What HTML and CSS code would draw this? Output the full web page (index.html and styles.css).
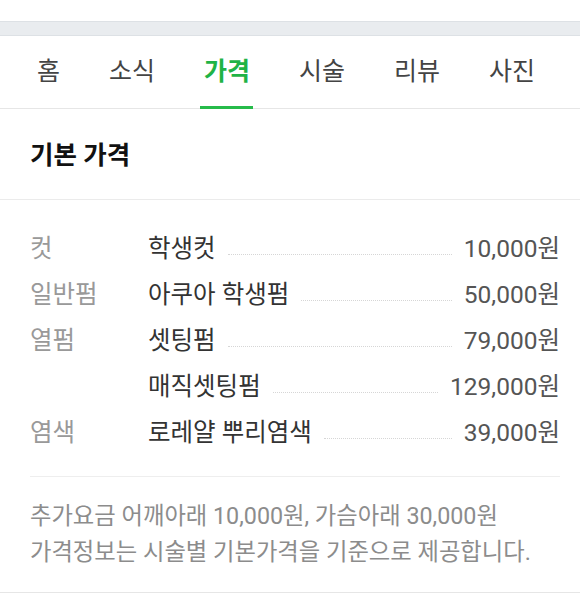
FILE: index.html
```html
<!DOCTYPE html>
<html lang="ko">
<head>
<meta charset="utf-8">
<title>기본 가격</title>
<link rel="stylesheet" href="styles.css">
</head>
<body>
<div class="topgap"></div>
<div class="band"></div>
<nav class="tabs">
  <a class="tab">홈</a>
  <a class="tab">소식</a>
  <a class="tab active">가격</a>
  <a class="tab">시술</a>
  <a class="tab">리뷰</a>
  <a class="tab">사진</a>
</nav>
<section class="card">
  <h2 class="title">기본 가격</h2>
  <div class="price-list">
    <div class="row">
      <span class="label">컷</span>
      <div class="item"><span class="name">학생컷</span><span class="leader"></span><span class="price">10,000원</span></div>
    </div>
    <div class="row">
      <span class="label">일반펌</span>
      <div class="item"><span class="name">아쿠아 학생펌</span><span class="leader"></span><span class="price">50,000원</span></div>
    </div>
    <div class="row">
      <span class="label">열펌</span>
      <div class="item"><span class="name">셋팅펌</span><span class="leader"></span><span class="price">79,000원</span></div>
    </div>
    <div class="row">
      <span class="label"></span>
      <div class="item"><span class="name">매직셋팅펌</span><span class="leader"></span><span class="price">129,000원</span></div>
    </div>
    <div class="row">
      <span class="label">염색</span>
      <div class="item"><span class="name">로레얄 뿌리염색</span><span class="leader"></span><span class="price">39,000원</span></div>
    </div>
  </div>
  <div class="divider"></div>
  <div class="note">
    <p>추가요금 어깨아래 10,000원, 가슴아래 30,000원</p>
    <p>가격정보는 시술별 기본가격을 기준으로 제공합니다.</p>
  </div>
</section>
</body>
</html>
```
FILE: styles.css
```css
* { box-sizing: border-box; }

html, body {
  margin: 0;
  padding: 0;
  background: #ffffff;
}

body {
  font-family: "Roboto", "Noto Sans CJK KR", sans-serif;
  color: #333333;
  width: 580px;
  overflow: hidden;
}

.topgap {
  height: 21px;
  background: #ffffff;
}

.band {
  height: 15px;
  background: #e9ecef;
  border-top: 1px solid #dde1e5;
  border-bottom: 1px solid #dde1e5;
}

.tabs {
  display: flex;
  align-items: center;
  gap: 43px;
  height: 73px;
  padding-left: 34px;
  border-bottom: 1px solid #e6e6e6;
}

.tab {
  position: relative;
  display: block;
  padding: 0 3px;
  font-size: 25px;
  line-height: 72px;
  color: #444444;
  text-decoration: none;
}

.tab.active {
  color: #1fb346;
  font-weight: 700;
}

.tab.active::after {
  content: "";
  position: absolute;
  left: -1px;
  right: 0;
  bottom: -1px;
  height: 3px;
  background: #26bb4a;
}

.card {
  background: #ffffff;
  border-bottom: 1px solid #e6e6e6;
}

.title {
  margin: 0;
  padding: 30px 30px 28px;
  font-size: 25.5px;
  line-height: 32px;
  font-weight: 700;
  color: #111111;
  border-bottom: 1px solid #ebebeb;
}

.price-list {
  padding: 26px 20px 20px 30px;
}

.row {
  display: grid;
  grid-template-columns: 118px 1fr;
  align-items: center;
  height: 46px;
}

.label {
  font-size: 24.5px;
  line-height: 30px;
  color: #999999;
}

.item {
  display: flex;
  align-items: center;
  min-width: 0;
}

.name {
  font-size: 24.5px;
  line-height: 30px;
  color: #333333;
  white-space: nowrap;
}

.leader {
  flex: 1;
  height: 0;
  margin: 10px 12px 0;
  border-top: 1px dotted #d6d6d6;
}

.price {
  font-size: 24.5px;
  line-height: 30px;
  color: #555555;
  white-space: nowrap;
}

.divider {
  margin: 0 20px 0 30px;
  border-top: 1px solid #eeeeee;
}

.note {
  padding: 21px 20px 22px 30px;
}

.note p {
  margin: 0;
  font-size: 23.3px;
  line-height: 36px;
  color: #8c8c8c;
  white-space: nowrap;
}
```
